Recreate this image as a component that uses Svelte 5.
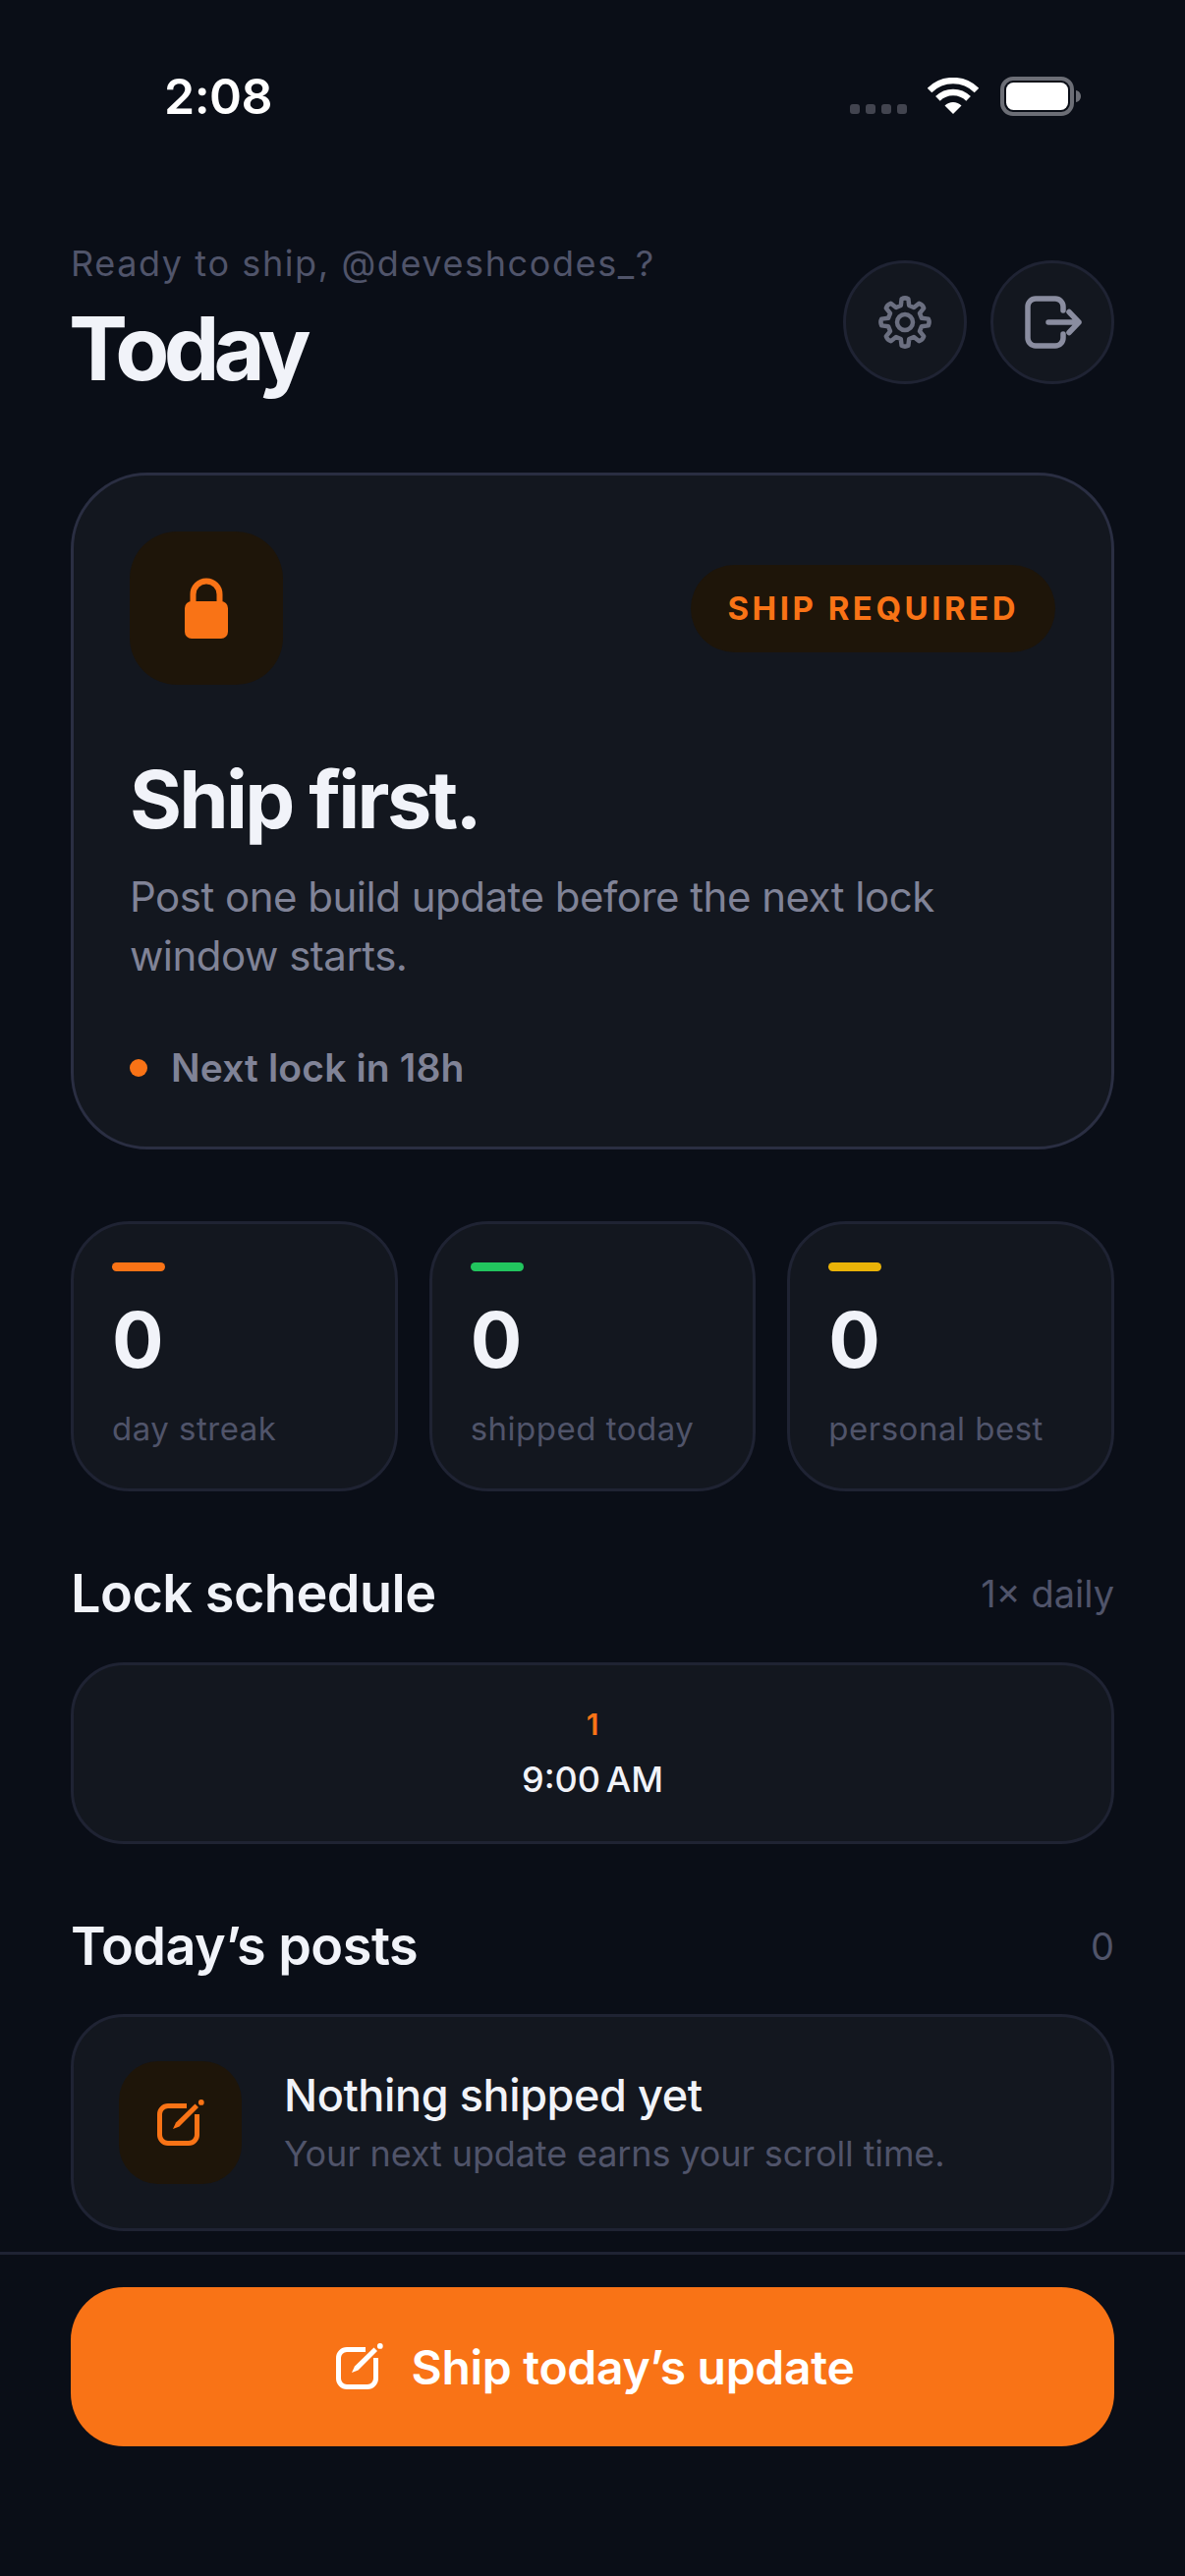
<script>
  const stats = [
    { value: 0, label: 'day streak', color: '#f97316' },
    { value: 0, label: 'shipped today', color: '#22c55e' },
    { value: 0, label: 'personal best', color: '#eab308' }
  ];

  // 8-tooth gear outline, centred on 30,30
  function gearPath() {
    const pts = [];
    for (let i = 0; i < 8; i++) {
      const a = (i * Math.PI) / 4 - Math.PI / 2;
      const step = Math.PI / 8;
      const at = (r, t) => `${(30 + r * Math.cos(t)).toFixed(2)} ${(30 + r * Math.sin(t)).toFixed(2)}`;
      pts.push(`${i ? 'L' : 'M'}${at(17.5, a - step * 0.62)}`);
      pts.push(`L${at(24, a - step * 0.36)}`);
      pts.push(`Q${at(25.5, a)} ${at(24, a + step * 0.36)}`);
      pts.push(`L${at(17.5, a + step * 0.62)}`);
    }
    return pts.join(' ') + ' Z';
  }
</script>

{#snippet editIcon()}
  <svg class="edit" viewBox="0 0 48 48" aria-hidden="true">
    <path class="edit-box" d="M30 6.500H11a8.500 8.500 0 0 0-8.500 8.500v21a8.500 8.500 0 0 0 8.500 8.500h21a8.500 8.500 0 0 0 8.500-8.500V15" />
    <path class="edit-pen" d="M16 30l3-6.500L38.500 4.500l3.500 3.500L22.500 27.500z" />
    <circle class="edit-pen" cx="44.800" cy="2.900" r="2.900" />
  </svg>
{/snippet}

<div class="page">
  <div class="status">
    <span class="time">2:08</span>
    <div class="status-icons">
      <div class="dots"><i></i><i></i><i></i><i></i></div>
      <svg class="wifi" viewBox="0 0 52 38" aria-hidden="true">
        <path d="M2 13A34 34 0 0 1 50 13M10.400 21.400A22 22 0 0 1 41.600 21.400" />
        <path class="wedge" d="M26 37L17.500 28.500A12 12 0 0 1 34.500 28.500Z" />
      </svg>
      <svg class="battery" viewBox="0 0 83 40" aria-hidden="true">
        <rect class="shell" x="2" y="2" width="71" height="36" rx="11" />
        <rect class="charge" x="6" y="6" width="63" height="28" rx="7.500" />
        <path class="nub" d="M77 14c3 .5 5 3 5 6s-2 5.500-5 6z" />
      </svg>
    </div>
  </div>

  <main>
    <header>
      <div>
        <p class="greet">Ready to ship, @deveshcodes_?</p>
        <h1>Today</h1>
      </div>
      <div class="actions">
        <button aria-label="Settings">
          <svg class="gear" viewBox="0 0 60 60" aria-hidden="true">
            <path d={gearPath()} />
            <circle cx="30" cy="30" r="8" />
          </svg>
        </button>
        <button aria-label="Sign out">
          <svg class="signout" viewBox="0 0 58 54" aria-hidden="true">
            <path d="M39 15V11a8 8 0 0 0-8-8H11a8 8 0 0 0-8 8v32a8 8 0 0 0 8 8h20a8 8 0 0 0 8-8v-4" />
            <path d="M24 27h31M45 16.500L55 27L45 37.500" />
          </svg>
        </button>
      </div>
    </header>

    <section class="card hero">
      <div class="hero-top">
        <div class="tile large">
          <svg class="lock" viewBox="0 0 44 62" aria-hidden="true">
            <path class="shackle" d="M8.500 26V17a13.500 13.500 0 0 1 27 0v9" />
            <rect x="0" y="24" width="44" height="38" rx="7" />
          </svg>
        </div>
        <span class="pill">SHIP REQUIRED</span>
      </div>
      <h2>Ship first.</h2>
      <p class="lede">Post one build update before the next lock window starts.</p>
      <p class="next"><i></i>Next lock in 18h</p>
    </section>

    <div class="stats">
      {#each stats as s}
        <div class="card stat">
          <i style:background={s.color}></i>
          <strong>{s.value}</strong>
          <span>{s.label}</span>
        </div>
      {/each}
    </div>

    <div class="section-head">
      <h3>Lock schedule</h3>
      <span>1× daily</span>
    </div>
    <div class="card schedule">
      <span class="slot">1</span>
      <span class="at">9:00 AM</span>
    </div>

    <div class="section-head">
      <h3>Today’s posts</h3>
      <span>0</span>
    </div>
    <div class="card empty">
      <div class="tile small">{@render editIcon()}</div>
      <div class="empty-text">
        <strong>Nothing shipped yet</strong>
        <span>Your next update earns your scroll time.</span>
      </div>
    </div>
  </main>

  <footer>
    <button class="cta">{@render editIcon()}<span>Ship today’s update</span></button>
  </footer>
</div>

<style>
  :global(body) {
    margin: 0;
    background: #0a0e17;
  }
  .page {
    height: 2622px;
    overflow: hidden;
    background: #0a0e17;
    color: #f1f3f9;
    font-family: Inter, 'Noto Sans', sans-serif;
  }
  h1, h2, h3, p {
    margin: 0;
  }
  i {
    display: block;
  }

  .status {
    display: flex;
    align-items: center;
    justify-content: space-between;
    height: 40px;
    padding: 78px 105px 0 167px;
  }
  .time {
    font-size: 50px;
    line-height: 40px;
    font-weight: 600;
    letter-spacing: -0.500px;
    color: #fff;
  }
  .status-icons {
    display: flex;
    align-items: flex-end;
    height: 40px;
  }
  .dots {
    display: flex;
    gap: 6px;
    margin: 0 21px 2px 0;
  }
  .dots i {
    width: 10px;
    height: 10px;
    border-radius: 3px;
    background: #42444f;
  }
  .wifi {
    width: 52px;
    height: 38px;
    margin: 0 22px 1px 0;
  }
  .wifi path {
    fill: none;
    stroke: #fff;
    stroke-width: 6.500;
  }
  .wifi .wedge {
    fill: #fff;
    stroke: none;
  }
  .battery {
    width: 83px;
    height: 40px;
  }
  .shell {
    fill: none;
    stroke: #6c6e76;
    stroke-width: 4;
  }
  .charge {
    fill: #fff;
  }
  .nub {
    fill: #6c6e76;
  }

  main {
    padding: 0 72px;
  }
  header {
    display: flex;
    justify-content: space-between;
    margin-top: 128px;
  }
  .greet {
    font-size: 36px;
    line-height: 44px;
    letter-spacing: 1.600px;
    color: #50546a;
  }
  h1 {
    margin: 13px 0 0 -2px;
    font-size: 90px;
    line-height: 104px;
    font-weight: 700;
    letter-spacing: -5.800px;
  }
  .actions {
    display: flex;
    gap: 24px;
    margin-top: 19px;
  }
  .actions button {
    display: grid;
    place-items: center;
    box-sizing: border-box;
    width: 126px;
    height: 126px;
    padding: 0;
    border: 3px solid #1f2333;
    border-radius: 50%;
    background: #13171f;
  }
  .gear {
    width: 60px;
    height: 60px;
  }
  .gear path, .gear circle {
    fill: none;
    stroke: #6b6f80;
    stroke-width: 4.500;
    stroke-linejoin: round;
  }
  .signout {
    width: 58px;
    height: 54px;
    margin-left: 2px;
  }
  .signout path {
    fill: none;
    stroke: #8a8da0;
    stroke-width: 5.500;
    stroke-linecap: round;
    stroke-linejoin: round;
  }

  .card {
    box-sizing: border-box;
    border: 3px solid #1f2333;
    background: #13171f;
  }
  .hero {
    margin-top: 74px;
    padding: 57px 57px 56px;
    border-color: #2a2e42;
    border-radius: 78px;
  }
  .hero-top {
    display: flex;
    align-items: center;
    justify-content: space-between;
  }
  .tile {
    display: grid;
    place-items: center;
    flex: none;
    background: #1e1509;
  }
  .tile.large {
    width: 156px;
    height: 156px;
    border-radius: 48px;
  }
  .lock {
    width: 44px;
    height: 62px;
  }
  .lock rect {
    fill: #f97316;
  }
  .shackle {
    fill: none;
    stroke: #f97316;
    stroke-width: 6;
  }
  .pill {
    padding: 0 37px;
    border-radius: 45px;
    background: #1e1509;
    color: #f97316;
    font-size: 33px;
    line-height: 89px;
    font-weight: 700;
    letter-spacing: 3.500px;
  }
  h2 {
    margin-top: 69px;
    font-size: 81px;
    line-height: 96px;
    font-weight: 700;
    letter-spacing: -2.700px;
  }
  .lede {
    margin-top: 21px;
    font-size: 42px;
    line-height: 60px;
    letter-spacing: -0.500px;
    color: #808397;
  }
  .next {
    display: flex;
    align-items: center;
    gap: 24px;
    margin-top: 60px;
    font-size: 39px;
    line-height: 48px;
    font-weight: 600;
    letter-spacing: 0.150px;
    color: #808397;
  }
  .next i {
    width: 18px;
    height: 18px;
    border-radius: 50%;
    background: #f97316;
  }

  .stats {
    display: grid;
    grid-template-columns: repeat(3, 1fr);
    gap: 32px;
    margin-top: 73px;
  }
  .stat {
    padding: 39px 39px 37px;
    border-radius: 60px;
  }
  .stat i {
    width: 54px;
    height: 9px;
    border-radius: 5px;
  }
  .stat strong {
    display: block;
    margin-top: 28px;
    font-size: 78px;
    line-height: 84px;
    font-weight: 700;
  }
  .stat span {
    display: block;
    margin-top: 24px;
    font-size: 33px;
    line-height: 48px;
    letter-spacing: 0.500px;
    color: #50546a;
  }

  .section-head {
    display: flex;
    align-items: center;
    justify-content: space-between;
    margin-top: 70px;
  }
  h3 {
    font-size: 54px;
    line-height: 68px;
    font-weight: 600;
    letter-spacing: -0.500px;
  }
  .section-head span {
    font-size: 38px;
    color: #50546a;
  }

  .schedule {
    display: flex;
    flex-direction: column;
    align-items: center;
    margin-top: 36px;
    padding: 42px 0 41px;
    border-radius: 54px;
  }
  .slot {
    font-size: 30px;
    line-height: 36px;
    font-weight: 600;
    color: #f97316;
  }
  .at {
    margin-top: 16px;
    font-size: 36px;
    line-height: 44px;
    font-weight: 500;
    word-spacing: -4px;
  }

  .empty {
    display: flex;
    align-items: center;
    gap: 43px;
    margin-top: 35px;
    padding: 45px 46px;
    border-radius: 54px;
  }
  .tile.small {
    width: 125px;
    height: 125px;
    border-radius: 40px;
  }
  .edit {
    width: 48px;
    height: 48px;
  }
  .edit-box {
    fill: none;
    stroke: currentColor;
    stroke-width: 5;
  }
  .edit-pen {
    fill: currentColor;
  }
  .tile.small .edit {
    color: #f97316;
  }
  .empty-text {
    display: flex;
    flex-direction: column;
    gap: 7px;
  }
  .empty-text strong {
    font-size: 45px;
    line-height: 56px;
    font-weight: 550;
    letter-spacing: -0.400px;
  }
  .empty-text span {
    font-size: 36px;
    line-height: 48px;
    letter-spacing: -0.120px;
    color: #50546a;
  }

  footer {
    margin-top: 21px;
    padding: 33px 72px 0;
    border-top: 3px solid #1f2333;
  }
  .cta {
    display: flex;
    align-items: center;
    justify-content: center;
    gap: 28px;
    box-sizing: border-box;
    width: 100%;
    height: 162px;
    padding: 0 0 0 6px;
    border: none;
    border-radius: 54px;
    background: #f97316;
    color: #fff;
    font-family: inherit;
    font-size: 48px;
    font-weight: 600;
    letter-spacing: -0.300px;
  }
</style>
